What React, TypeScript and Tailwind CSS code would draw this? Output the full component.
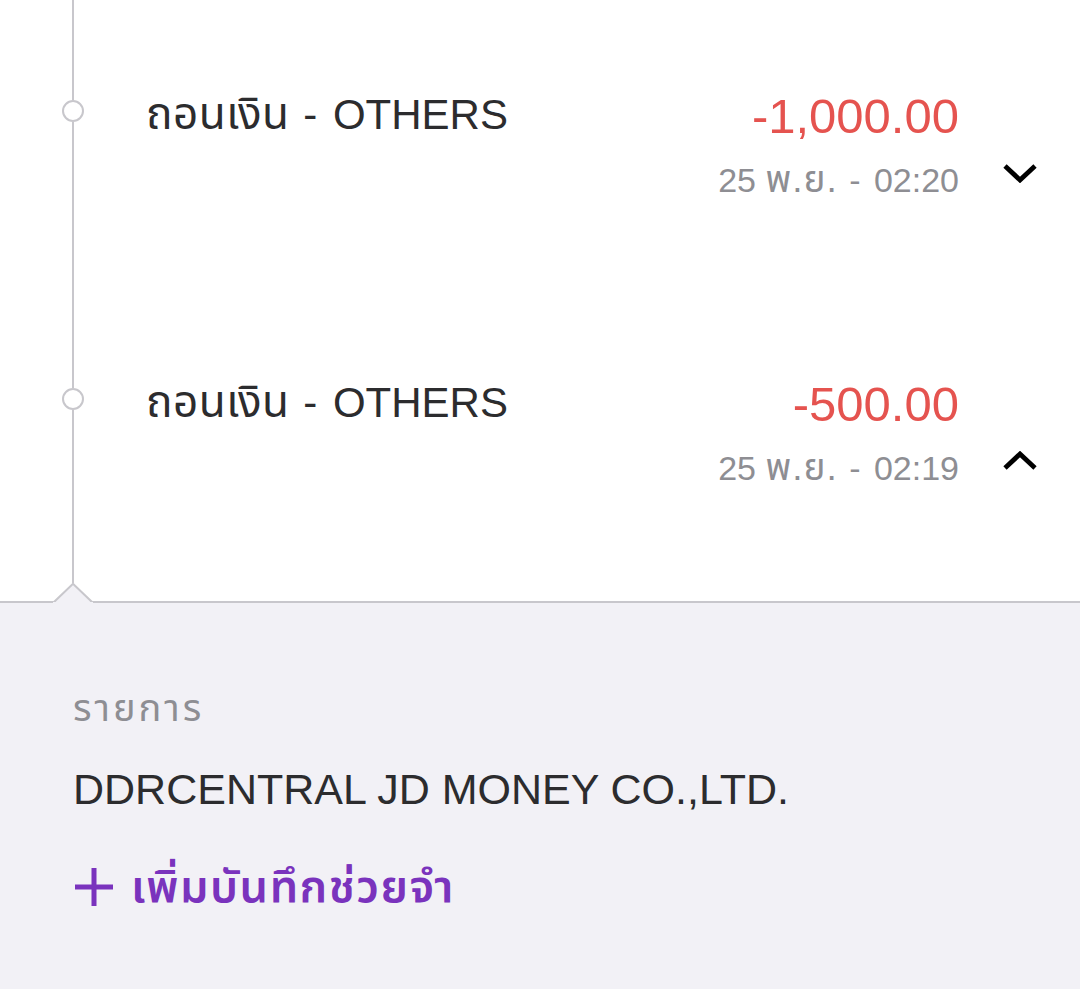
import React from "react";

const FONT = { fontFamily: '"Liberation Sans", "Noto Sans Thai", "Noto Sans", sans-serif' };

function Chevron({ up }: { up?: boolean }) {
  return (
    <svg width="34" height="20" viewBox="0 0 34 20" className="block">
      <polyline
        points={up ? "2,17 17,3 32,17" : "2,3 17,17 32,3"}
        fill="none"
        stroke="#000"
        strokeWidth="4.8"
        strokeLinejoin="miter"
      />
    </svg>
  );
}

function Row({ amount, time, up }: { amount: string; time: string; up?: boolean }) {
  return (
    <div className="h-[288px] pt-[89px] flex items-start">
      <div className="flex-1 text-[42px] leading-[50px] text-[#2c2c2e] whitespace-nowrap">
        <span className="text-[44px] tracking-[0.5px]">ถอนเงิน</span>
        <span className="tracking-[2px]"> - </span>OTHERS
      </div>
      <div className="flex flex-col items-end">
        <div className="text-[49px] leading-[54px] text-[#e5534f]">{amount}</div>
        <div className="mt-[15px] text-[34px] leading-[44px] text-[#8e8e93] whitespace-nowrap">
          25 <span className="text-[37px] tracking-[1px]">พ.ย.</span>
          <span className="tracking-[2px]"> - </span>
          {time}
        </div>
      </div>
      <div className="ml-[44px] mr-[43px] mt-[74px]">
        <Chevron up={up} />
      </div>
    </div>
  );
}

function Dot() {
  return <div className="w-[22px] h-[22px] rounded-full border-2 border-[#c8c7cc] bg-white shrink-0" />;
}

export default function App() {
  return (
    <div className="w-[1080px] h-[989px] flex flex-col bg-white overflow-hidden" style={FONT}>
      <div className="flex h-[601px] shrink-0">
        <div className="w-[146px] shrink-0 flex flex-col items-center pb-[18px]">
          <div className="w-[2px] h-[100px] bg-[#c8c7cc]" />
          <Dot />
          <div className="w-[2px] h-[266px] bg-[#c8c7cc]" />
          <Dot />
          <div className="w-[2px] flex-1 bg-[#c8c7cc]" />
        </div>
        <div className="flex-1 flex flex-col">
          <Row amount="-1,000.00" time="02:20" />
          <Row amount="-500.00" time="02:19" up />
        </div>
      </div>
      <div className="relative flex-1 bg-[#f2f1f6] border-t-2 border-[#c8c7cc] pl-[73px] pt-[84px]">
        <svg
          width="40"
          height="22"
          viewBox="0 0 40 22"
          className="absolute left-[53px] top-[-20px]"
        >
          <polygon points="1,20 20,1 39,20" fill="#f2f1f6" />
          <polyline points="0,20 20,0.8 40,20" fill="none" stroke="#c8c7cc" strokeWidth="2" />
          <rect x="0" y="19" width="40" height="3" fill="#f2f1f6" />
        </svg>
        <div className="text-[38px] leading-[42px] tracking-[3px] text-[#8e8e93]">รายการ</div>
        <div className="mt-[35px] text-[43px] leading-[50px] text-[#2c2c2e] whitespace-nowrap">
          DDRCENTRAL JD MONEY CO.,LTD.
        </div>
        <div className="mt-[48px] flex items-center">
          <svg width="42" height="42" viewBox="0 0 42 42" className="block">
            <path d="M21 2 V40 M2 21 H40" stroke="#7a33bd" strokeWidth="5" fill="none" />
          </svg>
          <span className="ml-[16px] text-[45px] leading-[50px] tracking-[1.5px] font-semibold text-[#7a33bd] whitespace-nowrap">
            เพิ่มบันทึกช่วยจำ
          </span>
        </div>
      </div>
    </div>
  );
}
